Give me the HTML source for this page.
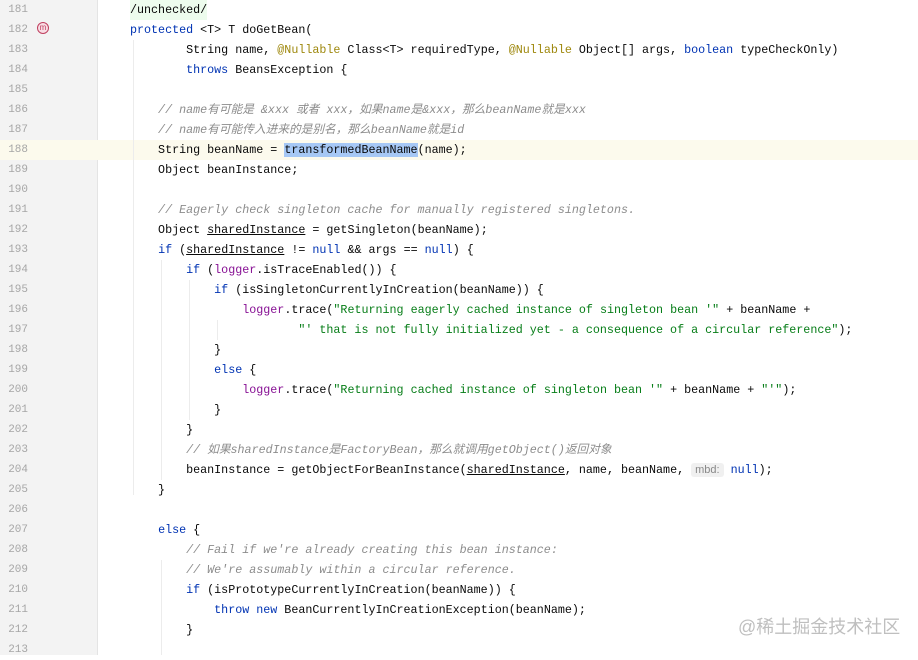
<!DOCTYPE html>
<html><head><meta charset="utf-8"><style>
body{margin:0;width:918px;height:655px;overflow:hidden;background:#fff;position:relative;font-family:"Liberation Mono","Noto Sans CJK SC",monospace;}
.g{position:absolute;left:0;top:0;width:97px;height:655px;background:#f3f3f3;}
.gl{position:absolute;left:97px;top:0;width:1px;height:655px;background:#e4e4e4;}
.hl{position:absolute;left:0;top:140px;width:918px;height:20px;background:#fcfaed;}
.n{position:absolute;left:0;width:28px;text-align:right;font-size:11px;color:#a6a6a6;line-height:20px;}
.l{position:absolute;left:130px;white-space:pre;font-size:11.7px;line-height:20px;color:#080808;}
.k{color:#0033b3}.s{color:#067d17}.c{color:#8c8c8c;font-style:italic}.a{color:#9e880d}.f{color:#871094}.u{text-decoration:underline}
.sel{background:#a6c8f5}
.hint{background:#f0f0f0;color:#888;font-family:"Liberation Sans",sans-serif;font-size:11px;border-radius:3px;padding:1px 4px}
.ig{position:absolute;width:1px;background:#ececec}
.wm{position:absolute;left:738px;top:613px;font-family:"Liberation Sans","Noto Sans CJK SC",sans-serif;font-size:18px;color:#bfbfbf}
</style></head><body>
<div class="g"></div><div class="gl"></div><div class="hl"></div>
<div class="ig" style="left:133px;top:40px;height:455px"></div>
<div class="ig" style="left:161px;top:260px;height:220px"></div>
<div class="ig" style="left:189px;top:280px;height:140px"></div>
<div class="ig" style="left:217px;top:320px;height:20px"></div>
<div class="ig" style="left:161px;top:560px;height:95px"></div>
<div class="n" style="top:0">181</div><div class="n" style="top:20px">182</div><div class="n" style="top:40px">183</div><div class="n" style="top:60px">184</div><div class="n" style="top:80px">185</div><div class="n" style="top:100px">186</div><div class="n" style="top:120px">187</div><div class="n" style="top:140px">188</div><div class="n" style="top:160px">189</div><div class="n" style="top:180px">190</div><div class="n" style="top:200px">191</div><div class="n" style="top:220px">192</div><div class="n" style="top:240px">193</div><div class="n" style="top:260px">194</div><div class="n" style="top:280px">195</div><div class="n" style="top:300px">196</div><div class="n" style="top:320px">197</div><div class="n" style="top:340px">198</div><div class="n" style="top:360px">199</div><div class="n" style="top:380px">200</div><div class="n" style="top:400px">201</div><div class="n" style="top:420px">202</div><div class="n" style="top:440px">203</div><div class="n" style="top:460px">204</div><div class="n" style="top:480px">205</div><div class="n" style="top:500px">206</div><div class="n" style="top:520px">207</div><div class="n" style="top:540px">208</div><div class="n" style="top:560px">209</div><div class="n" style="top:580px">210</div><div class="n" style="top:600px">211</div><div class="n" style="top:620px">212</div><div class="n" style="top:640px">213</div>
<div style="position:absolute;left:37px;top:22px;width:10px;height:10px;border:1px solid #c04060;border-radius:50%;background:#f8dde4;font-size:8px;color:#c04060;text-align:center;line-height:10px;font-family:Liberation Sans">m</div>
<div class="l" style="top:0;background:#edfced">/unchecked/</div>
<div class="l" style="top:20px"><span class="k">protected</span> &lt;T&gt; T doGetBean(</div>
<div class="l" style="top:40px">        String name, <span class="a">@Nullable</span> Class&lt;T&gt; requiredType, <span class="a">@Nullable</span> Object[] args, <span class="k">boolean</span> typeCheckOnly)</div>
<div class="l" style="top:60px">        <span class="k">throws</span> BeansException {</div>
<div class="l c" style="top:100px">    // name有可能是 &amp;xxx 或者 xxx，如果name是&amp;xxx，那么beanName就是xxx</div>
<div class="l c" style="top:120px">    // name有可能传入进来的是别名，那么beanName就是id</div>
<div class="l" style="top:140px">    String beanName = <span class="sel">transformedBeanName</span>(name);</div>
<div class="l" style="top:160px">    Object beanInstance;</div>
<div class="l c" style="top:200px">    // Eagerly check singleton cache for manually registered singletons.</div>
<div class="l" style="top:220px">    Object <span class="u">sharedInstance</span> = getSingleton(beanName);</div>
<div class="l" style="top:240px">    <span class="k">if</span> (<span class="u">sharedInstance</span> != <span class="k">null</span> &amp;&amp; args == <span class="k">null</span>) {</div>
<div class="l" style="top:260px">        <span class="k">if</span> (<span class="f">logger</span>.isTraceEnabled()) {</div>
<div class="l" style="top:280px">            <span class="k">if</span> (isSingletonCurrentlyInCreation(beanName)) {</div>
<div class="l" style="top:300px">                <span class="f">logger</span>.trace(<span class="s">"Returning eagerly cached instance of singleton bean '"</span> + beanName +</div>
<div class="l" style="top:320px">                        <span class="s">"' that is not fully initialized yet - a consequence of a circular reference"</span>);</div>
<div class="l" style="top:340px">            }</div>
<div class="l" style="top:360px">            <span class="k">else</span> {</div>
<div class="l" style="top:380px">                <span class="f">logger</span>.trace(<span class="s">"Returning cached instance of singleton bean '"</span> + beanName + <span class="s">"'"</span>);</div>
<div class="l" style="top:400px">            }</div>
<div class="l" style="top:420px">        }</div>
<div class="l c" style="top:440px">        // 如果sharedInstance是FactoryBean，那么就调用getObject()返回对象</div>
<div class="l" style="top:460px">        beanInstance = getObjectForBeanInstance(<span class="u">sharedInstance</span>, name, beanName, <span class="hint">mbd:</span> <span class="k">null</span>);</div>
<div class="l" style="top:480px">    }</div>
<div class="l" style="top:520px">    <span class="k">else</span> {</div>
<div class="l c" style="top:540px">        // Fail if we're already creating this bean instance:</div>
<div class="l c" style="top:560px">        // We're assumably within a circular reference.</div>
<div class="l" style="top:580px">        <span class="k">if</span> (isPrototypeCurrentlyInCreation(beanName)) {</div>
<div class="l" style="top:600px">            <span class="k">throw new</span> BeanCurrentlyInCreationException(beanName);</div>
<div class="l" style="top:620px">        }</div>
<div class="wm">@稀土掘金技术社区</div>
</body></html>
